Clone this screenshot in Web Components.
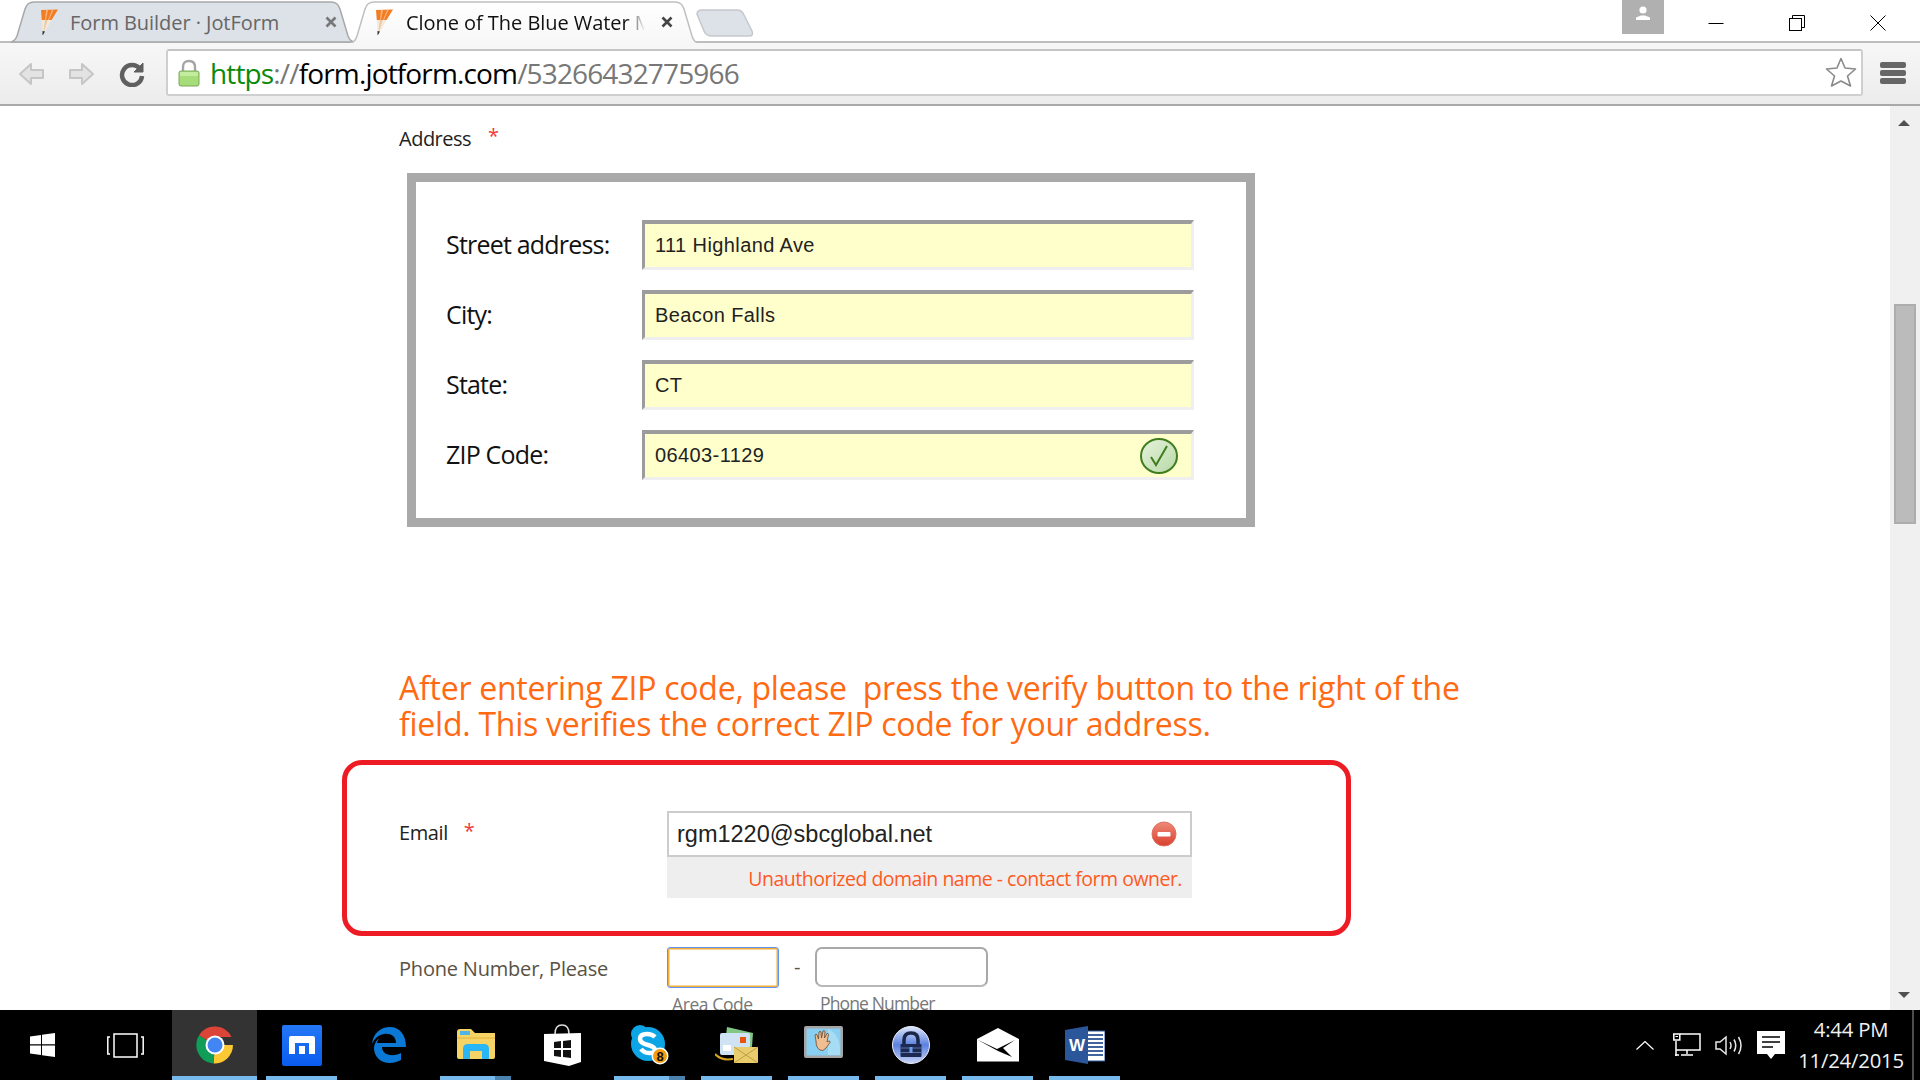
<!DOCTYPE html>
<html><head><meta charset="utf-8"><style>
html,body{margin:0;padding:0;height:100%;overflow:hidden;background:#fff}
body{font-family:"Open Sans","Liberation Sans",sans-serif}
</style></head><body>
<desk-app></desk-app>
<template id="t-app"><style>
:host{display:flex;flex-direction:column;width:1920px;height:1080px;overflow:hidden}
.main{flex:1;display:flex;min-height:0}
.page{flex:1;min-width:0;overflow:hidden}
</style>
<browser-tabs></browser-tabs>
<browser-toolbar></browser-toolbar>
<div class="main"><div class="page"><jot-form></jot-form></div><scroll-bar></scroll-bar></div>
<task-bar></task-bar>
</template>

<template id="t-tabs"><style>
:host{display:flex;height:43px;background:#fff;position:relative;align-items:flex-end;box-sizing:border-box}
.line{position:absolute;left:0;right:0;bottom:0;height:2px;background:#bdbdbd}
.tabs{display:flex;align-items:flex-end;padding-left:10px;position:relative;height:43px}
.new{width:58px;height:28px;margin:0 0 6px 2px;flex:none}
.spacer{flex:1}
.badge{width:42px;height:34px;background:#b0b0b0;align-self:flex-start;display:flex;align-items:flex-start;padding-top:6px;box-sizing:border-box;justify-content:center;flex:none}
.ctrl{display:flex;align-self:flex-start;flex:none;margin:0 2px 0 11px}
.ctrl div{width:81px;height:46px;display:flex;align-items:center;justify-content:center}
</style>
<div class="line"></div>
<div class="tabs">
<browser-tab label="Form Builder · JotForm" width="345"></browser-tab>
<browser-tab label="Clone of The Blue Water Mountain" width="349" active></browser-tab>
<svg class="new" viewBox="0 0 58 28"><path d="M1 5Q1 1 6 1H41Q46 1 48 6L56 22Q58 27 53 27H16Q10 27 8 22Z" fill="#dde1e8" stroke="#c6c8cc" stroke-width="1.5"/></svg>
</div>
<div class="spacer"></div>
<div class="badge"><svg width="16" height="15" viewBox="0 0 16 15"><circle cx="8" cy="4" r="3.6" fill="#fff"/><path d="M1 14V11.500L6 9.500H10L15 11.500V14Z" fill="#fff"/></svg></div>
<div class="ctrl">
<div><svg width="16" height="16" viewBox="0 0 16 16"><path d="M0.500 8.500H15.500" stroke="#000"/></svg></div>
<div><svg width="16" height="16" viewBox="0 0 16 16" fill="none" stroke="#000"><path d="M3.500 3V0.500H15.500V12.500H13"/><rect x="0.500" y="3.500" width="12" height="12"/></svg></div>
<div><svg width="16" height="16" viewBox="0 0 16 16" fill="none" stroke="#000"><path d="M0.500 0.500L15.500 15.500M15.500 0.500L0.500 15.500"/></svg></div>
</div>
</template>

<template id="t-tab"><style>
:host{display:block;position:relative;height:43px;flex:none;margin-right:-5px;font-family:"Open Sans","Liberation Sans",sans-serif}
.bg{position:absolute;left:0;top:0}
.bg svg{display:block}
.row{position:relative;display:flex;align-items:center;height:43px;padding:1px 0 0 31px;box-sizing:border-box}
.fav{flex:none;width:18px;height:26px;margin-right:11px}
.lbl{flex:none;font-size:20px;white-space:nowrap;overflow:hidden;letter-spacing:-.05px}
.x{flex:none;width:12px;height:12px}
</style>
<div class="bg"></div>
<div class="row">
<svg class="fav" viewBox="0 0 18 26"><path d="M0 1L17 .5L10.500 11H.8Z" fill="#f27c22"/><path d="M5 1L7 1L5 11H4ZM11 1L12.500 1L8 11H7Z" fill="#f9b27a"/><path d="M.8 11H10.500L4 22.500H1.500Z" fill="#f5e8d8"/><path d="M4 11H6.500L3 22.500H2.500Z" fill="#e6c9a6"/><path d="M1.500 22L4 22.500L2 26H1.500Z" fill="#333"/></svg>
<span class="lbl"></span>
<svg class="x" viewBox="0 0 12 12"><path d="M1.500 1.500L10.500 10.500M10.500 1.500L1.500 10.500" stroke-width="2.600"/></svg>
</div>
</template>

<template id="t-toolbar"><style>
:host{display:flex;align-items:center;height:63px;box-sizing:border-box;background:linear-gradient(#f7f7f7,#ececec);border-bottom:2px solid #a9a9a9;padding:0 14px 0 0;position:relative}
.nav{flex:none;width:166px;height:100%;display:flex;align-items:center}
.nav svg{flex:none}
.bar{flex:1;height:47px;margin-top:-2px;background:#fff;border:2px solid #cfcfcf;border-top-color:#c4c4c4;border-radius:3px;display:flex;align-items:center;box-sizing:border-box;min-width:0}
.lock{flex:none;width:22px;height:28px;margin:0 10px 0 10px}
.url{flex:1;font-size:28px;white-space:nowrap;color:#000;letter-spacing:-.85px;font-family:"Open Sans","Liberation Sans",sans-serif}
.url b{font-weight:400;color:#0a8a0a}.url i{font-style:normal;color:#777}
.star{flex:none;margin-right:4px}
.menu{flex:none;width:26px;height:22px;margin:-2px 0 0 17px;display:flex;flex-direction:column;justify-content:space-between}
.menu span{height:6px;background:#666;border-radius:2px;display:block}
</style>
<div class="nav">
<svg style="margin-left:17px" width="28" height="24" viewBox="0 0 28 24"><path d="M14 2L3 12L14 22V16H26V8H14Z" fill="#e3e3e3" stroke="#c6c6c6" stroke-width="2" stroke-linejoin="round"/></svg>
<svg style="margin-left:23px" width="28" height="24" viewBox="0 0 28 24"><path d="M14 2L25 12L14 22V16H2V8H14Z" fill="#e3e3e3" stroke="#c6c6c6" stroke-width="2" stroke-linejoin="round"/></svg>
<svg style="margin-left:23px" width="26" height="26" viewBox="0 0 26 26"><path d="M21 8A10 10 0 1 0 23 15" fill="none" stroke="#5f5f5f" stroke-width="4.500"/><path d="M15 11L24 2V11Z" fill="#5f5f5f" stroke="#5f5f5f" stroke-width="1"/></svg>
</div>
<div class="bar">
<svg class="lock" viewBox="0 0 22 28"><path d="M5 13V8Q5 2 11 2Q17 2 17 8V13" fill="none" stroke="#a5a5a5" stroke-width="2.400"/><rect x="1" y="12" width="20" height="15" rx="2" fill="#a6dc7a" stroke="#7aa858"/><rect x="2" y="13" width="18" height="4" fill="#c4ec9f"/></svg>
<span class="url"><b>https</b><i>://</i>form.jotform.com<i>/53266432775966</i></span>
<svg class="star" width="32" height="31" viewBox="0 0 32 31"><path d="M16 1.500L20 11L30.500 12L22.500 19L25.500 29L16 24L6.500 29L9.500 19L1.500 12L12 11Z" fill="#fff" stroke="#8a8a8a" stroke-width="1.600" stroke-linejoin="round"/></svg>
</div>
<div class="menu"><span></span><span></span><span></span></div>
</template>

<template id="t-form"><style>
:host{display:block;height:904px;padding-left:399px;box-sizing:border-box;color:#222;font-family:"Open Sans","Liberation Sans",sans-serif}
.addr{display:flex;height:67px;padding-top:19px;box-sizing:border-box;font-size:20px;letter-spacing:-.5px;color:#222;line-height:28px}
.req{color:#f23a3a;font-size:20px;margin-left:17px;line-height:22px}
.box{margin-left:8px;width:848px;height:354px;border:9px solid #a9a9a9;box-sizing:border-box;padding:38px 0 0 31px;display:flex;flex-direction:column;gap:20px;background:#fff}
.note{margin:0;padding-top:143px;font-size:32px;line-height:35.5px;color:#ff6a13;width:1100px;letter-spacing:-.25px;white-space:nowrap}
.red{margin:19px 0 0 -57px;width:1009px;height:176px;border:5px solid #ed1c24;border-radius:20px;box-sizing:border-box;display:flex;padding:46px 0 0 52px}
.lb{width:268px;flex:none;font-size:20px;letter-spacing:-.4px;line-height:30px;display:flex;padding-top:7px;box-sizing:border-box}
.lb .req{margin-left:16px;margin-top:2px}
.em{width:525px;flex:none}
.ein{height:46px;border:2px solid #ccc;box-sizing:border-box;display:flex;align-items:center;padding:0 13px 0 8px;font-family:"Liberation Sans",Arial,sans-serif;font-size:23.5px;background:#fff;color:#222}
.ein span{flex:1}
.err{height:41px;background:#eee;color:#ff5a1e;font-size:19.5px;letter-spacing:-.5px;text-align:right;padding-right:10px;line-height:43px;white-space:nowrap}
.ph{display:flex;margin-top:11px;color:#5a5244;font-size:20px;letter-spacing:-.2px}
.pl{width:268px;flex:none;line-height:44px}
.fld{display:flex;flex-direction:column;flex:none}
.sub{font-size:17.5px;color:#777;letter-spacing:-.4px;margin:6px 0 0 5px;line-height:20px;height:23px;white-space:nowrap}
.sub.n{letter-spacing:-.85px}
.area{width:112px;height:41px;box-sizing:border-box;border:1px solid #5f95ee;border-radius:3px;background:#fff;box-shadow:inset 0 0 0 1.5px #f0ae3c}
.num{width:173px;height:40px;box-sizing:border-box;border:2px solid #a8a8a8;border-bottom-color:#b8b8b8;border-radius:7px;background:#fff}
.dash{width:36px;flex:none;text-align:center;font-size:20px;line-height:40px;color:#555}
</style>
<div class="addr"><span>Address</span><span class="req">*</span></div>
<div class="box">
<form-row label="Street address:" value="111 Highland Ave"></form-row>
<form-row label="City:" value="Beacon Falls"></form-row>
<form-row label="State:" value="CT"></form-row>
<form-row label="ZIP Code:" value="06403-1129" ok></form-row>
</div>
<p class="note">After entering ZIP code, please&nbsp; press the verify button to the right of the<br>field. This verifies the correct ZIP code for your address.</p>
<div class="red">
<div class="lb"><span>Email</span><span class="req">*</span></div>
<div class="em">
<div class="ein"><span>rgm1220@sbcglobal.net</span>
<svg width="26" height="26" viewBox="0 0 26 26"><defs><linearGradient id="rg" x1="0" y1="0" x2="0" y2="1"><stop offset="0" stop-color="#ee8a78"/><stop offset="1" stop-color="#d9402f"/></linearGradient></defs><circle cx="13" cy="13" r="12" fill="url(#rg)" stroke="#e0705f"/><rect x="6.500" y="11" width="13" height="4.500" rx="1" fill="#fff"/></svg></div>
<div class="err">Unauthorized domain name - contact form owner.</div>
</div>
</div>
<div class="ph">
<div class="pl">Phone Number, Please</div>
<div class="fld"><div class="area"></div><div class="sub">Area Code</div></div>
<div class="dash">-</div>
<div class="fld"><div class="num"></div><div class="sub n">Phone Number</div></div>
</div>
</template>

<template id="t-row"><style>
:host{display:flex;align-items:center;height:50px}
.l{width:196px;margin-left:-1px;flex:none;font-size:25px;letter-spacing:-.8px;color:#111;white-space:nowrap;padding-bottom:2px;box-sizing:border-box}
.i{width:552px;height:50px;flex:none;box-sizing:border-box;background:#ffc;border-style:solid;border-width:4px 3px 3px 3px;border-color:#9c9c9c #efefef #efefef #9c9c9c;display:flex;align-items:center;padding:0 13px 0 10px;font:20px "Liberation Sans",Arial,sans-serif;letter-spacing:.4px;color:#222}
.i span{flex:1}
svg{display:none;flex:none}
:host([ok]) svg{display:block}
</style>
<div class="l"></div><div class="i"><span></span>
<svg width="38" height="36" viewBox="0 0 38 36"><defs><linearGradient id="gg" x1="0" y1="0" x2="1" y2="1"><stop offset="0" stop-color="#e6f3dc"/><stop offset="1" stop-color="#b7d9a6"/></linearGradient></defs><ellipse cx="19" cy="18" rx="18" ry="17" fill="url(#gg)" stroke="#3f7d1f" stroke-width="2"/><path d="M11 19L16 27L27 8" fill="none" stroke="#3f7d1f" stroke-width="2"/></svg></div>
</template>

<template id="t-scroll"><style>
:host{display:flex;flex-direction:column;width:30px;flex:none;background:#f0f0f0;align-items:center;box-sizing:border-box}
.a{width:0;height:0;border-left:6px solid transparent;border-right:6px solid transparent;flex:none;position:relative;left:-1px}
.u{border-bottom:6px solid #505050;margin-top:14px}
.t{width:22px;height:220px;background:#bbb;border:2px solid #adadad;box-sizing:border-box;margin-top:178px;flex:none}
.s{flex:1}
.d{border-top:6px solid #505050;margin-bottom:12px}
</style><div class="a u"></div><div class="t"></div><div class="s"></div><div class="a d"></div></template>

<template id="t-taskbar"><style>
:host{display:flex;height:70px;background:#000;color:#fff;flex:none;position:relative;font-family:"Open Sans","Liberation Sans",sans-serif}
.left{display:flex;flex:none;width:171px}
.sys{display:flex;align-items:center;justify-content:center;flex:none;height:100%}
.apps{display:flex;flex:none}
.tray{flex:1;display:flex;align-items:center;height:100%;padding-left:508px;box-sizing:border-box}
.tray svg{flex:none}
.clock{flex:none;width:112px;text-align:center;font-size:20.3px;line-height:31px;margin-left:10px;letter-spacing:-.2px;color:#f2f2f2;white-space:nowrap}
.sd{width:2px;height:100%;background:#4c4c4c;flex:none;margin-left:5px}
</style>
<div class="left">
<div class="sys" style="width:84px"><svg width="25" height="24" viewBox="0 0 25 24" fill="#fff"><path d="M0 3.500L11 2V11.300H0ZM12 1.800L25 0V11.300H12ZM0 12.500H11V22L0 20.500ZM12 12.500H25V24L12 22.200Z"/></svg></div>
<div class="sys" style="width:82px"><svg width="37" height="25" viewBox="0 0 37 25" fill="none" stroke="#fff" stroke-width="1.500"><rect x="7" y="1" width="23" height="23"/><path d="M3 4H.8V21H3M34 4H36.200V21H34"/></svg></div>
</div>
<div class="apps">
<task-app state="active"><svg width="38" height="38" viewBox="0 0 38 38"><path d="M19 19L3 9.500A18.500 18.500 0 0 1 35.500 11H19Z" fill="#db4437"/><path d="M19 19H37A18.500 18.500 0 0 1 17.500 37.500Z" fill="#fcc934"/><path d="M19 19L17.500 37.500A18.500 18.500 0 0 1 3 9.500Z" fill="#0f9d58"/><circle cx="19" cy="19" r="9.500" fill="#fff"/><circle cx="19" cy="19" r="7.500" fill="#4285f4"/></svg></task-app>
<task-app state="open"><svg width="40" height="41" viewBox="0 0 40 41"><defs><linearGradient id="mx" x1="0" y1="0" x2="0" y2="1"><stop offset="0" stop-color="#2478f5"/><stop offset="1" stop-color="#0a5cf0"/></linearGradient></defs><rect width="40" height="41" rx="2" fill="url(#mx)"/><path d="M7 13Q7 11 9 11H31Q33 11 33 13V29H27V18H13V29H7Z" fill="#fff"/><rect x="17" y="21" width="6" height="8" fill="#fff"/></svg></task-app>
<task-app><svg width="35" height="36" viewBox="0 0 35 36"><path d="M1 17C2 6 10 0 19 0C29 0 35 8 35 20H11C11 27 20 31 30 26V33C17 40 3 34 3 21C3 17 5 14 8 11C7 13 6 15 6 16H25C25 9 19 6 13 7C7 8 3 12 1 17Z" fill="#0a78d4"/></svg></task-app>
<task-app state="split" style="padding-bottom:2px"><svg width="38" height="30" viewBox="0 0 38 30"><path d="M0 3Q0 0 3 0H14L18 4H38V28Q38 30 36 30H2Q0 30 0 28Z" fill="#f6d365"/><path d="M0 9H38" stroke="#e2b43c"/><rect x="3" y="2" width="10" height="4" fill="#4fb3e8"/><path d="M6 30V20Q6 15 11 15H27Q32 15 32 20V30H25V22H13V30Z" fill="#29b6f6"/></svg></task-app>
<task-app><svg width="37" height="42" viewBox="0 0 37 42"><path d="M11 10Q11 1 18 1Q25 1 25 10" fill="none" stroke="#ddd" stroke-width="1.500"/><path d="M0 10L37 9V38L25 42L0 37Z" fill="#fff"/><path d="M10 18L17 17V24L10 24ZM19 17L27 16V24L19 24ZM10 26H17V33L10 32ZM19 26H27V34L19 33Z" fill="#111"/></svg></task-app>
<task-app state="split"><svg width="39" height="40" viewBox="0 0 39 40"><circle cx="18" cy="19" r="17" fill="#0ea5e6"/><circle cx="10" cy="9" r="9" fill="#0ea5e6"/><circle cx="27" cy="28" r="9" fill="#0ea5e6"/><path d="M25 12Q22 9 17 9Q10 9 10 14Q10 18 18 20Q25 22 25 25Q25 28 19 28Q14 28 11 24" fill="none" stroke="#fff" stroke-width="4.500"/><circle cx="30" cy="31" r="8.500" fill="#fff"/><circle cx="30" cy="31" r="7" fill="#f39c12"/><text x="30" y="36" text-anchor="middle" font-family="Liberation Sans" font-size="13" font-weight="700" fill="#111">8</text></svg></task-app>
<task-app state="open"><svg width="43" height="36" viewBox="0 0 43 36"><path d="M12 0L38 6L37 20L10 16Z" fill="#82c785"/><path d="M5 8Q5 6 7 6H33Q35 6 35 8V28H7Q5 28 5 26Z" fill="#cfe3f5"/><rect x="25" y="10" width="6" height="6" fill="#e8540e"/><rect x="8" y="18" width="8" height="6" fill="#fff"/><path d="M0 27Q6 34 18 32" fill="none" stroke="#d9a520" stroke-width="2"/><rect x="19" y="20" width="24" height="16" fill="#e9cd6c"/><path d="M19 20L43 36M43 20L19 36" stroke="#bd9f45"/></svg></task-app>
<task-app state="open" style="padding-bottom:6px"><svg width="39" height="32" viewBox="0 0 39 32"><rect width="39" height="32" rx="2" fill="#a5a5a5"/><rect x="2.500" y="2.500" width="34" height="27" fill="#88cff2"/><path d="M24 3Q37 8 36 29H24Z" fill="#a7dcf5"/><path d="M12 15L11 9Q12 7 13 9L14.500 13L15 6Q16 4.500 17 6L17.500 12L19 5Q20 4 21 5.500L20.500 12L23 7.500Q24.500 7 24.500 8.500L23 16L25 15Q26.500 15 26 16.500L22 22Q19 26 16 24Q12 22 12 15Z" fill="#efbe92" stroke="#6b4a30" stroke-width=".8"/></svg></task-app>
<task-app state="open"><svg width="38" height="38" viewBox="0 0 38 38"><defs><linearGradient id="kp" x1="0" y1="0" x2="0" y2="1"><stop offset="0" stop-color="#dfe8fb"/><stop offset=".5" stop-color="#5a80e0"/><stop offset="1" stop-color="#c8d6f5"/></linearGradient></defs><circle cx="19" cy="19" r="18.500" fill="url(#kp)" stroke="#e9eefb"/><path d="M12 18V14Q12 7 19 7Q26 7 26 14V18" fill="none" stroke="#1c2647" stroke-width="3.500"/><rect x="8.500" y="18" width="21" height="13" rx="1" fill="#1c2a52"/><path d="M8.500 22H29.500M8.500 26.500H29.500" stroke="#5a70a8" stroke-width="1"/><rect x="17.500" y="21" width="3" height="6" fill="#6e9bea"/></svg></task-app>
<task-app state="open"><svg width="42" height="34" viewBox="0 0 42 34"><path d="M0 11L21 0L42 11V33.500H0Z" fill="#fff"/><path d="M0 11.500L20 21L38 12L26 20L35 29L21 23L0 11.500Z" fill="#000"/></svg></task-app>
<task-app state="open"><svg width="40" height="38" viewBox="0 0 40 38"><path d="M20 5H40V35H20Z" fill="#fff" stroke="#2b579a"/><path d="M22 9H38M22 13H38M22 17H38M22 21H38M22 25H38M22 29H38" stroke="#41649f" stroke-width="2"/><path d="M0 4L23 0V38L0 34Z" fill="#2b579a"/><text x="4" y="25" font-family="Liberation Sans" font-size="17" font-weight="700" fill="#fff">W</text></svg></task-app>
</div>
<div class="tray">
<svg width="18" height="9" viewBox="0 0 18 9" fill="none" stroke="#fff" stroke-width="1.200"><path d="M.5 8.500L9 .5L17.500 8.500"/></svg>
<svg style="margin-left:19px" width="28" height="24" viewBox="0 0 28 24" fill="none" stroke="#fff" stroke-width="1.500"><path d="M7 1H27V17H3M14 17V21M8 22H20M3 8V23M2 22H6"/><rect x=".8" y="1" width="6" height="6" fill="#000"/><path d="M2.500 3.500H5" stroke-width="1"/></svg>
<svg style="margin-left:14px" width="29" height="21" viewBox="0 0 29 21" fill="none" stroke="#e8e8e8" stroke-width="1.500"><path d="M1 7H5L11 2V19L5 14H1Z"/><path d="M15 7Q17 10.500 15 14M19 4.500Q22.500 10.500 19 16.500M23.500 2Q28.500 10.500 23.500 19"/></svg>
<svg style="margin-left:13px" width="28" height="28" viewBox="0 0 28 28"><path d="M0 0H28V23H18L14 28L10 23H0Z" fill="#fff"/><path d="M5 6H23M5 11H23M5 16H16" stroke="#000" stroke-width="1.700"/></svg>
<div class="clock"><div>4:44 PM</div><div>11/24/2015</div></div>
<div class="sd"></div>
</div>
</template>

<template id="t-app-btn"><style>
:host{display:flex;width:87px;height:70px;flex:none;position:relative;align-items:center;justify-content:center;box-sizing:border-box}
:host([state=active]){background:linear-gradient(#333,#333) 1px 0/85px 100% no-repeat}
.u{position:absolute;bottom:0;height:4px;left:8px;right:8px;display:none;background:#76b9ed}
:host([state=active]) .u{display:block;left:1px;right:1px}
:host([state=open]) .u{display:block}
:host([state=split]) .u{display:block;background:linear-gradient(90deg,#76b9ed 0 55px,#4a82ad 55px)}
::slotted(svg){display:block}
</style><slot></slot><div class="u"></div></template>

<script>
function mk(tag,tpl,extra){customElements.define(tag,class extends HTMLElement{constructor(){super();this.attachShadow({mode:"open"}).appendChild(document.getElementById(tpl).content.cloneNode(true));}connectedCallback(){extra&&extra.call(this,this.shadowRoot)}})}
mk("desk-app","t-app");
mk("browser-tabs","t-tabs");
mk("browser-tab","t-tab",function(r){
 const w=+this.getAttribute("width"),act=this.hasAttribute("active");
 this.style.width=w+"px";
 const b=act?43:42;
 const fill=act?"url(#ta)":"#dde1e8",s=act?"#c0c0c0":"#a8a8a8";
 r.querySelector(".bg").innerHTML=`<svg width="${w}" height="43" viewBox="0 0 ${w} 43"><defs><linearGradient id="ta" x1="0" y1="0" x2="0" y2="1"><stop offset="0" stop-color="#fff"/><stop offset="1" stop-color="#f7f7f7"/></linearGradient></defs><path d="M1 ${b}Q5 ${b-1} 7 36L15 9Q17 2 24 2H${w-24}Q${w-17} 2 ${w-15} 9L${w-7} 36Q${w-5} ${b-1} ${w-1} ${b}${act?"":"Z"}" fill="${fill}" stroke="${s}" stroke-width="1.500"/></svg>`;
 const l=r.querySelector(".lbl");l.textContent=this.getAttribute("label");
 l.style.width=act?"239px":"244px";l.style.color=act?"#111":"#666";
 if(act){l.style.webkitMaskImage="linear-gradient(90deg,#000 92%,transparent)";l.style.maskImage="linear-gradient(90deg,#000 92%,transparent)";}
 const x=r.querySelector(".x");x.style.stroke=act?"#444":"#777";x.style.marginLeft=act?"16px":"11px";
 r.querySelector(".row").style.paddingLeft=act?"26px":"31px";
 if(act)r.querySelector(".fav").style.marginRight="12px";
});
mk("browser-toolbar","t-toolbar");
mk("jot-form","t-form");
mk("form-row","t-row",function(r){r.querySelector(".l").textContent=this.getAttribute("label");r.querySelector(".i span").textContent=this.getAttribute("value")});
mk("scroll-bar","t-scroll");
mk("task-bar","t-taskbar");
mk("task-app","t-app-btn");
</script>
</body></html>
